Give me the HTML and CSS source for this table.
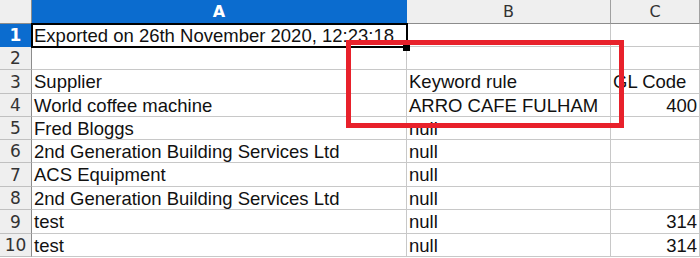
FILE: index.html
```html
<!DOCTYPE html>
<html>
<head>
<meta charset="utf-8">
<link rel="stylesheet" href="styles.css">
</head>
<body>
<div class="sheet">
  <div class="grid">
    <div class="corner"></div>
    <div class="colhead sel">A</div>
    <div class="colhead">B</div>
    <div class="colhead">C</div>

    <div class="rowhead sel">1</div>
    <div class="cell a1">Exported on 26th November 2020, 12:23:18</div>
    <div class="cell"></div>
    <div class="cell"></div>

    <div class="rowhead">2</div>
    <div class="cell"></div>
    <div class="cell"></div>
    <div class="cell"></div>

    <div class="rowhead">3</div>
    <div class="cell">Supplier</div>
    <div class="cell">Keyword rule</div>
    <div class="cell">GL Code</div>

    <div class="rowhead">4</div>
    <div class="cell">World coffee machine</div>
    <div class="cell">ARRO CAFE FULHAM</div>
    <div class="cell num">400</div>

    <div class="rowhead">5</div>
    <div class="cell">Fred Bloggs</div>
    <div class="cell">null</div>
    <div class="cell"></div>

    <div class="rowhead">6</div>
    <div class="cell">2nd Generation Building Services Ltd</div>
    <div class="cell">null</div>
    <div class="cell"></div>

    <div class="rowhead">7</div>
    <div class="cell">ACS Equipment</div>
    <div class="cell">null</div>
    <div class="cell"></div>

    <div class="rowhead">8</div>
    <div class="cell">2nd Generation Building Services Ltd</div>
    <div class="cell">null</div>
    <div class="cell"></div>

    <div class="rowhead">9</div>
    <div class="cell">test</div>
    <div class="cell">null</div>
    <div class="cell num">314</div>

    <div class="rowhead">10</div>
    <div class="cell">test</div>
    <div class="cell">null</div>
    <div class="cell num">314</div>
  </div>
  <div class="cursor"></div>
  <div class="handle"></div>
  <div class="highlight"></div>
</div>
</body>
</html>
```

FILE: styles.css
```css
html, body {
  margin: 0;
  padding: 0;
  background: #ffffff;
}

.sheet {
  position: relative;
  width: 700px;
  height: 258px;
  overflow: hidden;
  font-family: "Liberation Sans", Arial, sans-serif;
}

.grid {
  display: grid;
  grid-template-columns: 32px 375px 204px 89px;
  grid-template-rows: 24px 23px 23px 24px 23px 23px 23px 24px 23px 24px 23px;
}

.grid > div {
  box-sizing: border-box;
  border-right: 1px solid #c8c8c8;
  border-bottom: 1px solid #c8c8c8;
  white-space: nowrap;
  overflow: visible;
}

.corner {
  background: #efefef;
  border-bottom-color: #8c8c8c !important;
  border-right-color: #8c8c8c !important;
}

.colhead {
  background: #efefef;
  color: #333333;
  font-family: "DejaVu Sans", sans-serif;
  font-size: 16px;
  display: flex;
  align-items: center;
  justify-content: center;
  border-bottom-color: #8c8c8c !important;
  border-right-color: #a0a0a0 !important;
}

.colhead.sel {
  background: #0b6ccf;
  color: #ffffff;
  font-weight: bold;
  border-right-color: #0b6ccf !important;
}

.rowhead {
  background: #efefef;
  color: #333333;
  font-family: "DejaVu Sans", sans-serif;
  font-size: 17px;
  display: flex;
  align-items: center;
  justify-content: center;
  border-right-color: #8c8c8c !important;
  border-bottom-color: #c0c0c0 !important;
}

.rowhead.sel {
  background: #0b6ccf;
  color: #ffffff;
  font-weight: bold;
  border-bottom-color: #0b6ccf !important;
}

.cell {
  color: #111111;
  font-size: 18.5px;
  line-height: 22px;
  padding-left: 2px;
  padding-top: 1px;
}

.cell.num {
  text-align: right;
  padding-left: 0;
  padding-right: 2px;
}

.cursor {
  position: absolute;
  left: 31px;
  top: 23px;
  width: 377px;
  height: 25px;
  box-sizing: border-box;
  border: 2px solid #000000;
}

.handle {
  position: absolute;
  left: 403px;
  top: 44px;
  width: 7px;
  height: 7px;
  background: #000000;
}

.highlight {
  position: absolute;
  left: 346px;
  top: 40px;
  width: 278px;
  height: 88px;
  box-sizing: border-box;
  border: 5px solid #e8212b;
}
```
